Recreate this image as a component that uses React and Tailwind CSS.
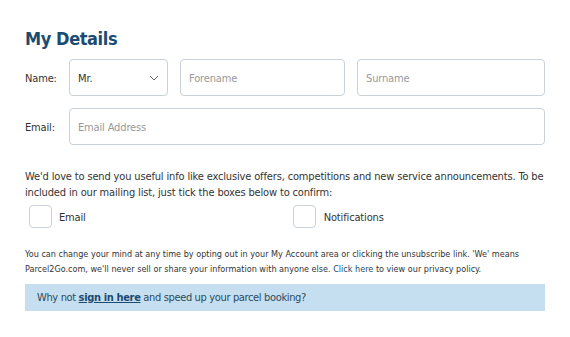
import React from "react";

export default function App() {
  const font = { fontFamily: '"DejaVu Sans Condensed", "DejaVu Sans", sans-serif' };
  return (
    <div className="w-[570px] h-[337px] bg-white text-[#333]" style={font}>
      <div className="pl-[25px] pr-[25px] pt-[28px]">
        <h1 className="text-[18px] font-bold text-[#1b4b70] leading-[21px] tracking-[-0.4px]">My Details</h1>
        <div className="mt-[10px] flex items-center">
          <span className="w-[44px] text-[11px] text-[#333] tracking-[-0.15px] translate-y-[2px]">Name:</span>
          <div className="w-[99px] h-[37px] border border-[#c9d1d9] rounded-[4px] flex items-center justify-between pl-[8px] pr-[8px]">
            <span className="text-[11px] text-[#333] translate-y-[2px]">Mr.</span>
            <svg width="10" height="6" viewBox="0 0 10 6" fill="none" stroke="#666" strokeWidth="1"><path d="M1 1l4 4 4-4" /></svg>
          </div>
          <div className="ml-[12px] w-[165px] h-[37px] border border-[#c9d1d9] rounded-[4px] flex items-center pl-[8px]">
            <span className="text-[11px] text-[#999] tracking-[-0.15px] translate-y-[2px]">Forename</span>
          </div>
          <div className="ml-[12px] w-[188px] h-[37px] border border-[#c9d1d9] rounded-[4px] flex items-center pl-[8px]">
            <span className="text-[11px] text-[#999] tracking-[-0.15px] translate-y-[2px]">Surname</span>
          </div>
        </div>
        <div className="mt-[12px] flex items-center">
          <span className="w-[44px] text-[11px] text-[#333] tracking-[-0.15px] translate-y-[2px]">Email:</span>
          <div className="w-[476px] h-[37px] border border-[#c9d1d9] rounded-[4px] flex items-center pl-[8px]">
            <span className="text-[11px] text-[#999] tracking-[-0.15px] translate-y-[2px]">Email Address</span>
          </div>
        </div>
        <p className="mt-[24px] text-[11px] leading-[16px] text-[#333] tracking-[-0.15px]">
          We'd love to send you useful info like exclusive offers, competitions and new service announcements. To be included in our mailing list, just tick the boxes below to confirm:
        </p>
        <div className="mt-[4px] flex items-center">
          <div className="ml-[4px] w-[23px] h-[23px] border border-[#c9d1d9] rounded-[4px]" />
          <span className="ml-[7px] text-[11px] text-[#333] tracking-[-0.15px] translate-y-[2px]">Email</span>
          <div className="ml-[207px] w-[23px] h-[23px] border border-[#c9d1d9] rounded-[4px]" />
          <span className="ml-[8px] text-[11px] text-[#333] tracking-[-0.15px] translate-y-[2px]">Notifications</span>
        </div>
        <p className="mt-[19px] text-[9px] leading-[15px] text-[#333]">
          You can change your mind at any time by opting out in your My Account area or clicking the unsubscribe link. 'We' means Parcel2Go.com, we'll never sell or share your information with anyone else. <span className="text-[#1b4b70]">Click here</span> to view our privacy policy.
        </p>
        <div className="mt-[7px] h-[27px] bg-[#c6dff0] flex items-center pl-[12px]">
          <span className="text-[11px] text-[#2b4a5e] tracking-[-0.35px] translate-y-[1px]">
            Why not <span className="font-bold underline text-[#1b4b70]">sign in here</span> and speed up your parcel booking?
          </span>
        </div>
      </div>
    </div>
  );
}
